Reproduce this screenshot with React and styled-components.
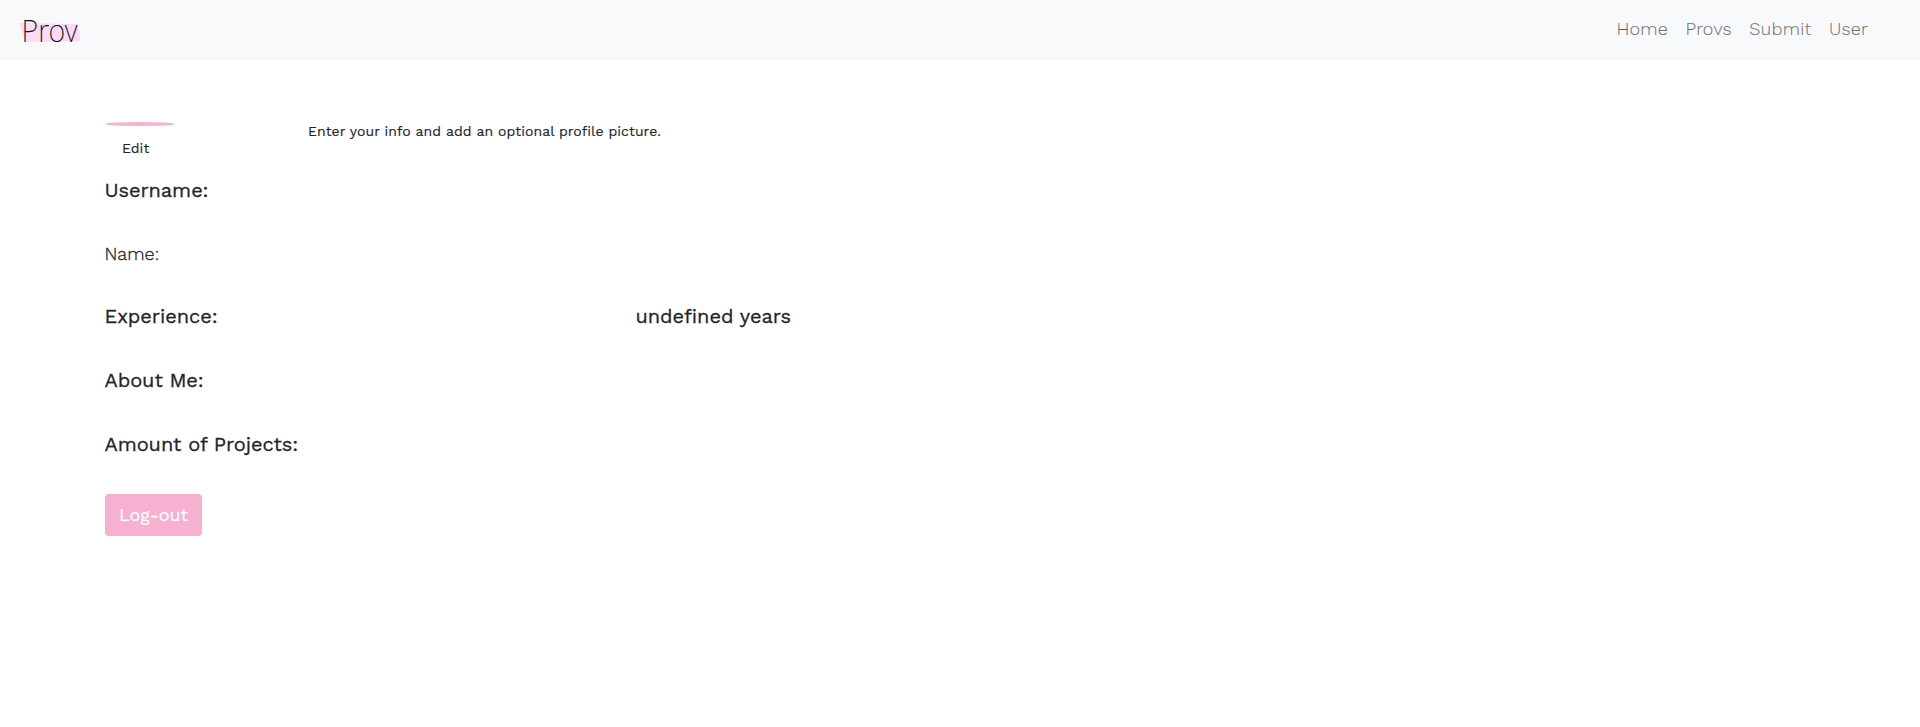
import React from "react";
import styled, { createGlobalStyle } from "styled-components";

const GlobalStyle = createGlobalStyle`
  * { box-sizing: border-box; }
  body {
    margin: 0;
    background: #fff;
    color: #212529;
    font-family: "Work Sans", Inter, "Liberation Sans", sans-serif;
  }
`;

const Navbar = styled.nav`
  display: flex;
  justify-content: space-between;
  align-items: center;
  height: 60px;
  padding: 0 52px 3px 18px;
  background: #f7f9fb;
`;

const Logo = styled.svg`
  display: block;
  width: 66px;
  height: 57px;
`;

const NavLinks = styled.div`
  display: flex;
  gap: 17.5px;
`;

const NavLink = styled.a`
  font-size: 18px;
  font-weight: 300;
  line-height: 26px;
  letter-spacing: 0.22px;
  white-space: nowrap;
  color: rgba(0, 0, 0, 0.5);
  -webkit-text-stroke: 0.2px rgba(0, 0, 0, 0.5);
`;

const Profile = styled.main`
  display: flex;
  flex-direction: column;
  align-items: flex-start;
  padding: 62px 105px 0;
`;

const Intro = styled.header`
  display: flex;
  height: 55px;
`;

const AvatarColumn = styled.div`
  width: 203px;
`;

const Avatar = styled.div`
  width: 70px;
  height: 4px;
  border-radius: 50%;
  background: #f8b0d0;
`;

const Small = styled.p`
  margin: ${(p) => p.$margin};
  font-size: 14px;
  line-height: 21px;
  letter-spacing: 0.07px;
  white-space: nowrap;
  -webkit-text-stroke: 0.15px #212529;
`;

const Field = styled.div`
  display: grid;
  grid-template-columns: 531px auto;
  height: ${(p) => p.$height || 64}px;
`;

const Label = styled.h2`
  margin: 0 0 0 -0.5px;
  font-size: ${(p) => (p.$light ? 18 : 20)}px;
  font-weight: ${(p) => (p.$light ? 300 : 400)};
  line-height: 26px;
  letter-spacing: ${(p) => (p.$light ? 0.1 : -0.05)}px;
  white-space: nowrap;
  -webkit-text-stroke: 0.3px #212529;
`;

const Button = styled.button`
  width: 97px;
  height: 42px;
  padding: 0;
  border: 0;
  border-radius: 4px;
  background: #f8b0d0;
  color: #fff;
  font: 400 18px/42px "Work Sans", Inter, "Liberation Sans", sans-serif;
  letter-spacing: -0.1px;
  -webkit-text-stroke: 0.2px #fff;
`;

const links = ["Home", "Provs", "Submit", "User"];

const fields = [
  { label: "Username:" },
  { label: "Name:", light: true, height: 62 },
  { label: "Experience:", value: "undefined years" },
  { label: "About Me:" },
  { label: "Amount of Projects:", height: 63 },
];

export default function App() {
  return (
    <>
      <GlobalStyle />
      <Navbar>
        <Logo viewBox="0 0 66 57" aria-label="Prov">
          <path d="M1 23 59 24 63 41 8 42Z" fill="#fcdaf6" />
          <text
            x="3.5"
            y="42"
            fontFamily="Noto Sans, Open Sans, sans-serif"
            fontSize="32"
            fontWeight="200"
            fill="#111"
            textLength="56"
            lengthAdjust="spacingAndGlyphs"
          >
            Prov
          </text>
        </Logo>
        <NavLinks>
          {links.map((text) => (
            <NavLink key={text}>{text}</NavLink>
          ))}
        </NavLinks>
      </Navbar>
      <Profile>
        <Intro>
          <AvatarColumn>
            <Avatar />
            <Small $margin="12px 0 0 17px">Edit</Small>
          </AvatarColumn>
          <Small $margin="-1px 0 0">
            Enter your info and add an optional profile picture.
          </Small>
        </Intro>
        {fields.map((f) => (
          <Field key={f.label} $height={f.height}>
            <Label $light={f.light}>{f.label}</Label>
            {f.value && <Label>{f.value}</Label>}
          </Field>
        ))}
        <Button>Log-out</Button>
      </Profile>
    </>
  );
}
